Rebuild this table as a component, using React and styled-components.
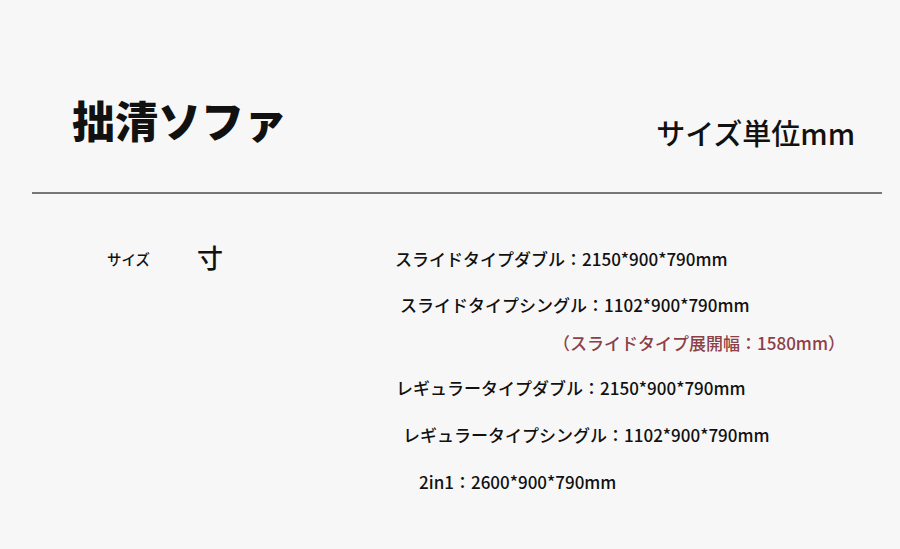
import React from 'react'
import styled, { createGlobalStyle } from 'styled-components'

const GlobalStyle = createGlobalStyle`
  html, body {
    margin: 0;
    padding: 0;
    background: #f7f7f7;
  }
  body {
    font-family: "Noto Sans CJK JP", "Noto Sans", sans-serif;
    color: #111;
  }
`

const Page = styled.div`
  width: 900px;
  height: 549px;
  box-sizing: border-box;
  padding: 0 18px 0 32px;
  overflow: hidden;
`

const Header = styled.header`
  display: flex;
  justify-content: space-between;
  align-items: flex-start;
  height: 192px;
`

const Title = styled.h1`
  margin: 96px 0 0 40px;
  font-size: 43px;
  line-height: 46px;
  font-weight: 900;
  letter-spacing: 0;
`

const Unit = styled.div`
  margin: 117px 27px 0 0;
  font-size: 29px;
  line-height: 30px;
  font-weight: 500;
`

const Divider = styled.hr`
  margin: 0;
  border: 0;
  height: 2px;
  background: #777;
`

const Body = styled.section`
  display: flex;
  align-items: flex-start;
  padding-left: 75px;
`

const SizeLabel = styled.div`
  margin-top: 55px;
  font-size: 14.5px;
  line-height: 20px;
  font-weight: 500;
`

const Kanji = styled.div`
  margin: 48px 0 0 47px;
  font-size: 26px;
  line-height: 30px;
  font-weight: 500;
`

const List = styled.ul`
  list-style: none;
  margin: 0 0 0 166px;
  padding: 53px 0 0;
`

const Line = styled.li`
  margin-top: ${p => p.$top || 0}px;
  padding-left: ${p => p.$indent || 0}px;
  font-size: 17px;
  line-height: 24px;
  font-weight: 500;
  white-space: nowrap;
  color: ${p => (p.$note ? '#8b4048' : '#111')};
`

const lines = [
  { text: 'スライドタイプダブル：2150*900*790mm', indent: 6, top: 0 },
  { text: 'スライドタイプシングル：1102*900*790mm', indent: 11, top: 22 },
  { text: '（スライドタイプ展開幅：1580mm）', indent: 164, top: 14, note: true },
  { text: 'レギュラータイプダブル：2150*900*790mm', indent: 7, top: 21 },
  { text: 'レギュラータイプシングル：1102*900*790mm', indent: 14, top: 23 },
  { text: '2in1：2600*900*790mm', indent: 30, top: 23 },
]

export default function App() {
  return (
    <Page>
      <GlobalStyle />
      <Header>
        <Title>拙清ソファ</Title>
        <Unit>サイズ単位mm</Unit>
      </Header>
      <Divider />
      <Body>
        <SizeLabel>サイズ</SizeLabel>
        <Kanji>寸</Kanji>
        <List>
          {lines.map(l => (
            <Line key={l.text} $indent={l.indent} $top={l.top} $note={l.note}>
              {l.text}
            </Line>
          ))}
        </List>
      </Body>
    </Page>
  )
}
